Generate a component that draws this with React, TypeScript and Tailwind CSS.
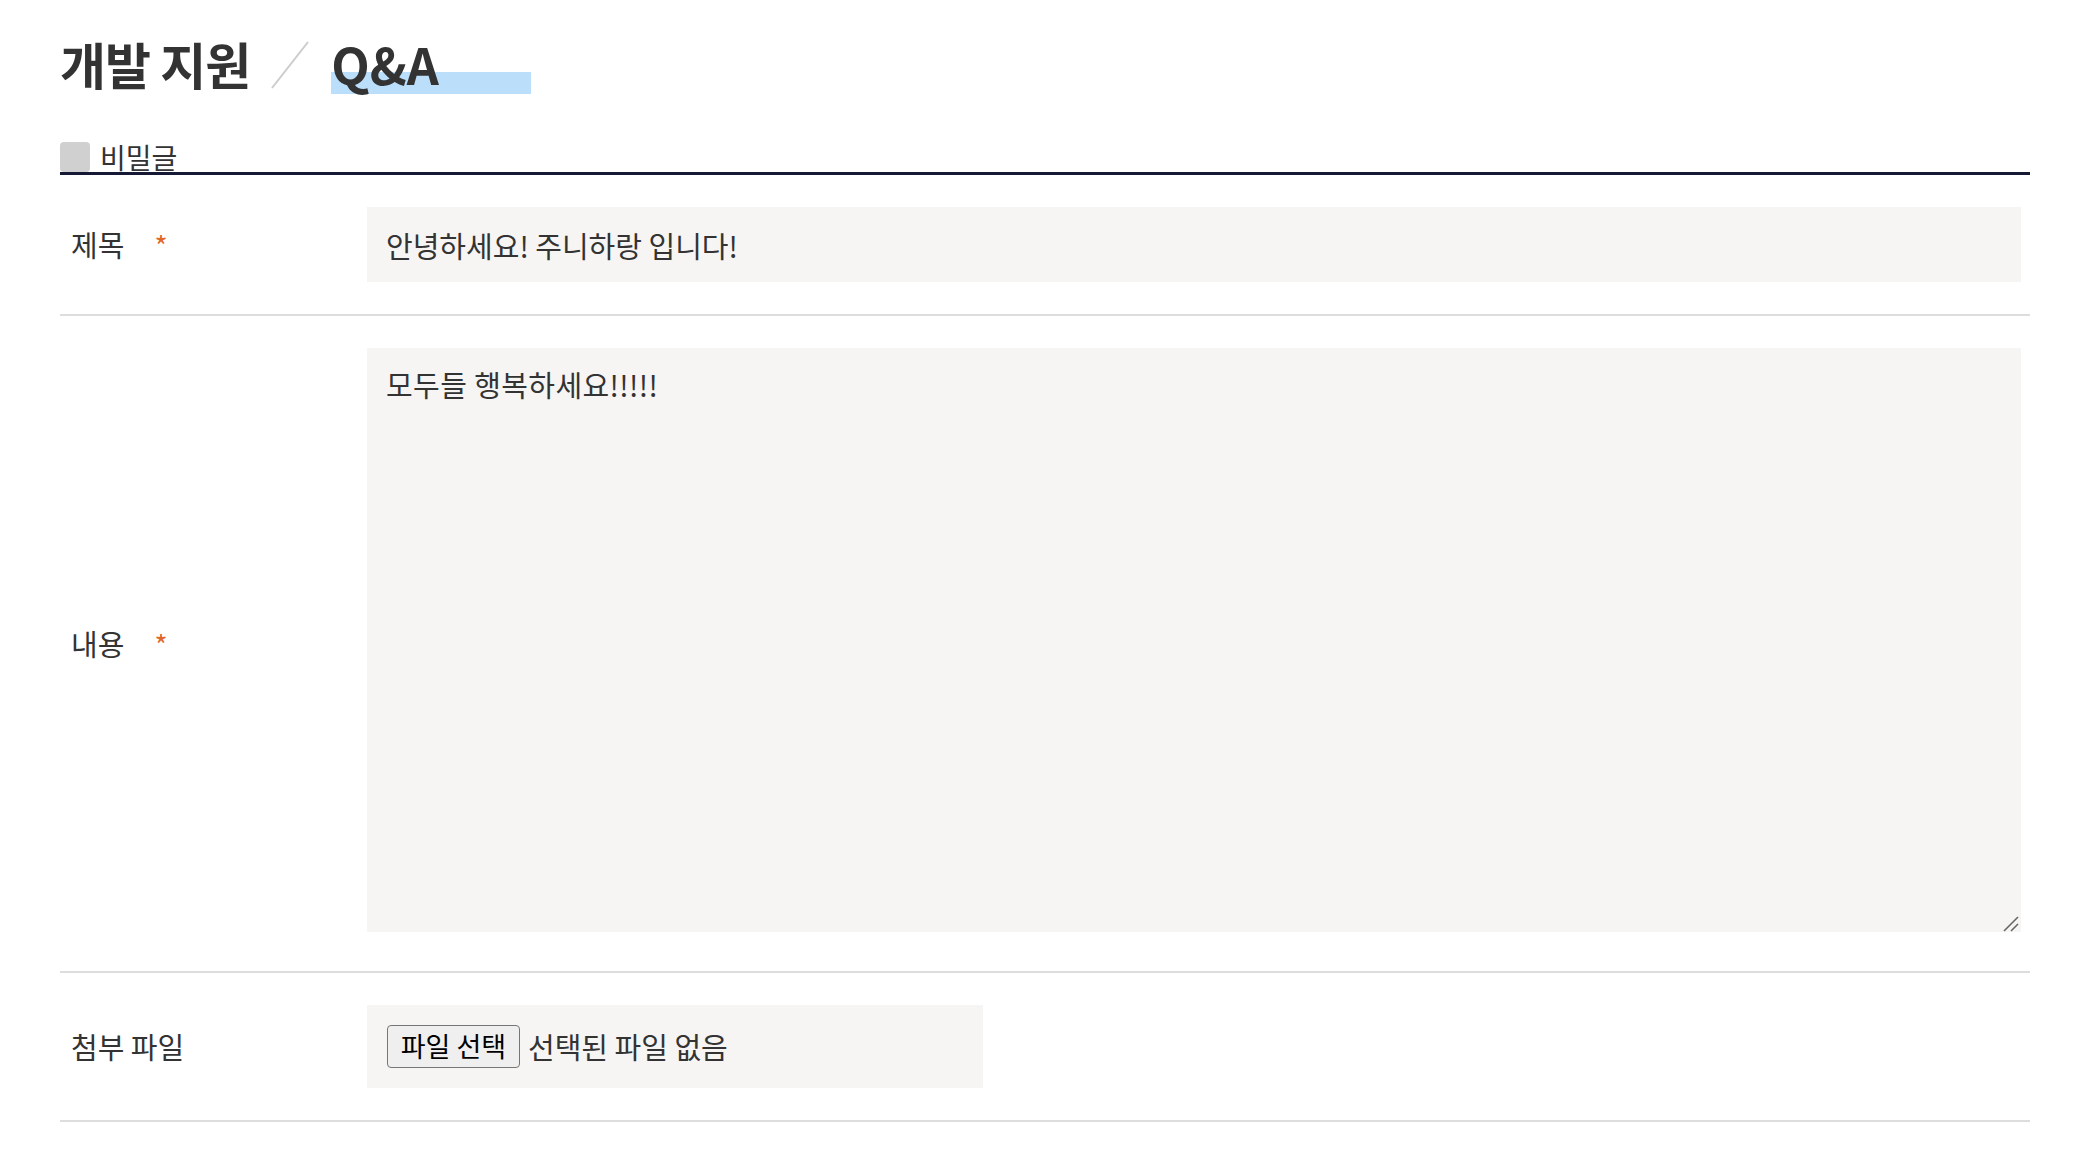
import { useState } from 'react';

const kr = "font-['Noto_Sans_CJK_KR','Noto_Sans',sans-serif]";

function Label({ text, required }: { text: string; required?: boolean }) {
  return (
    <div className="flex w-[307px] shrink-0 items-center pl-[11px] text-[29px] text-[#333333]">
      <span>{text}</span>
      {required && <span className="ml-[30px] text-[28px] text-[#e0662a]">*</span>}
    </div>
  );
}

export default function App() {
  const [secret, setSecret] = useState(false);
  const [title, setTitle] = useState('안녕하세요! 주니하랑 입니다!');
  const [body, setBody] = useState('모두들 행복하세요!!!!!');

  return (
    <div className={`min-h-screen bg-white px-[60px] pt-[30px] ${kr} text-[#333333]`}>
      <div className="flex items-end">
        <h1 className="text-[50px] font-bold leading-[66px] tracking-[-1px]">개발 지원</h1>
        <svg width="40" height="50" viewBox="0 0 40 50" className="ml-[20px] mr-[21px] mb-[6px]">
          <line x1="2" y1="48" x2="38" y2="2" stroke="#cccccc" strokeWidth="2" />
        </svg>
        <span className="relative isolate text-[50px] font-bold leading-[66px]">
          <span className="absolute bottom-[2px] left-0 -z-10 h-[22px] w-[200px] bg-[#bbdefb]" />
          Q&amp;A
        </span>
      </div>

      <label className="mt-[46px] flex cursor-pointer items-center gap-[10px]">
        <input
          type="checkbox"
          checked={secret}
          onChange={(e) => setSecret(e.target.checked)}
          className="h-[30px] w-[30px] appearance-none rounded-[4px] bg-[#d0d0d0]"
        />
        <span className="text-[28px] leading-[30px]">비밀글</span>
      </label>
      <div className="h-[3px] bg-[#151934]" />

      <div className="flex items-center border-b-2 border-[#dddddd] py-[32px]">
        <Label text="제목" required />
        <div className="flex min-w-0 flex-1 pr-[9px]">
          <input
            value={title}
            onChange={(e) => setTitle(e.target.value)}
            className="h-[75px] w-full bg-[#f6f5f3] px-[19px] text-[29px] text-[#333333] outline-none"
          />
        </div>
      </div>

      <div className="flex items-center border-b-2 border-[#dddddd] py-[32px]">
        <Label text="내용" required />
        <div className="flex min-w-0 flex-1 pr-[9px]">
          <div className="relative mb-[7px] w-full">
            <textarea
              value={body}
              onChange={(e) => setBody(e.target.value)}
              className="block h-[584px] w-full resize-none bg-[#f6f5f3] px-[19px] py-[20px] text-[29px] leading-[32px] tracking-[0.4px] text-[#333333] outline-none"
            />
            {/* resize grip */}
            <svg width="16" height="16" viewBox="0 0 16 16" className="pointer-events-none absolute bottom-0 right-[2px]">
              <line x1="1" y1="15" x2="15" y2="1" stroke="#666666" strokeWidth="1.6" />
              <line x1="8" y1="15" x2="15" y2="8" stroke="#666666" strokeWidth="1.6" />
            </svg>
          </div>
        </div>
      </div>

      <div className="flex items-center border-b-2 border-[#dddddd] py-[32px]">
        <Label text="첨부 파일" />
        <div className="flex min-w-0 flex-1 pr-[9px]">
          <div className="flex h-[83px] w-[616px] items-center gap-[8px] bg-[#f6f5f3] px-[20px] text-[29px]">
            <span className="flex h-[43px] w-[133px] items-center justify-center rounded-[4px] border border-[#767676] bg-[#efefef] text-[27px] text-black">
              파일 선택
            </span>
            <span>선택된 파일 없음</span>
          </div>
        </div>
      </div>
    </div>
  );
}
